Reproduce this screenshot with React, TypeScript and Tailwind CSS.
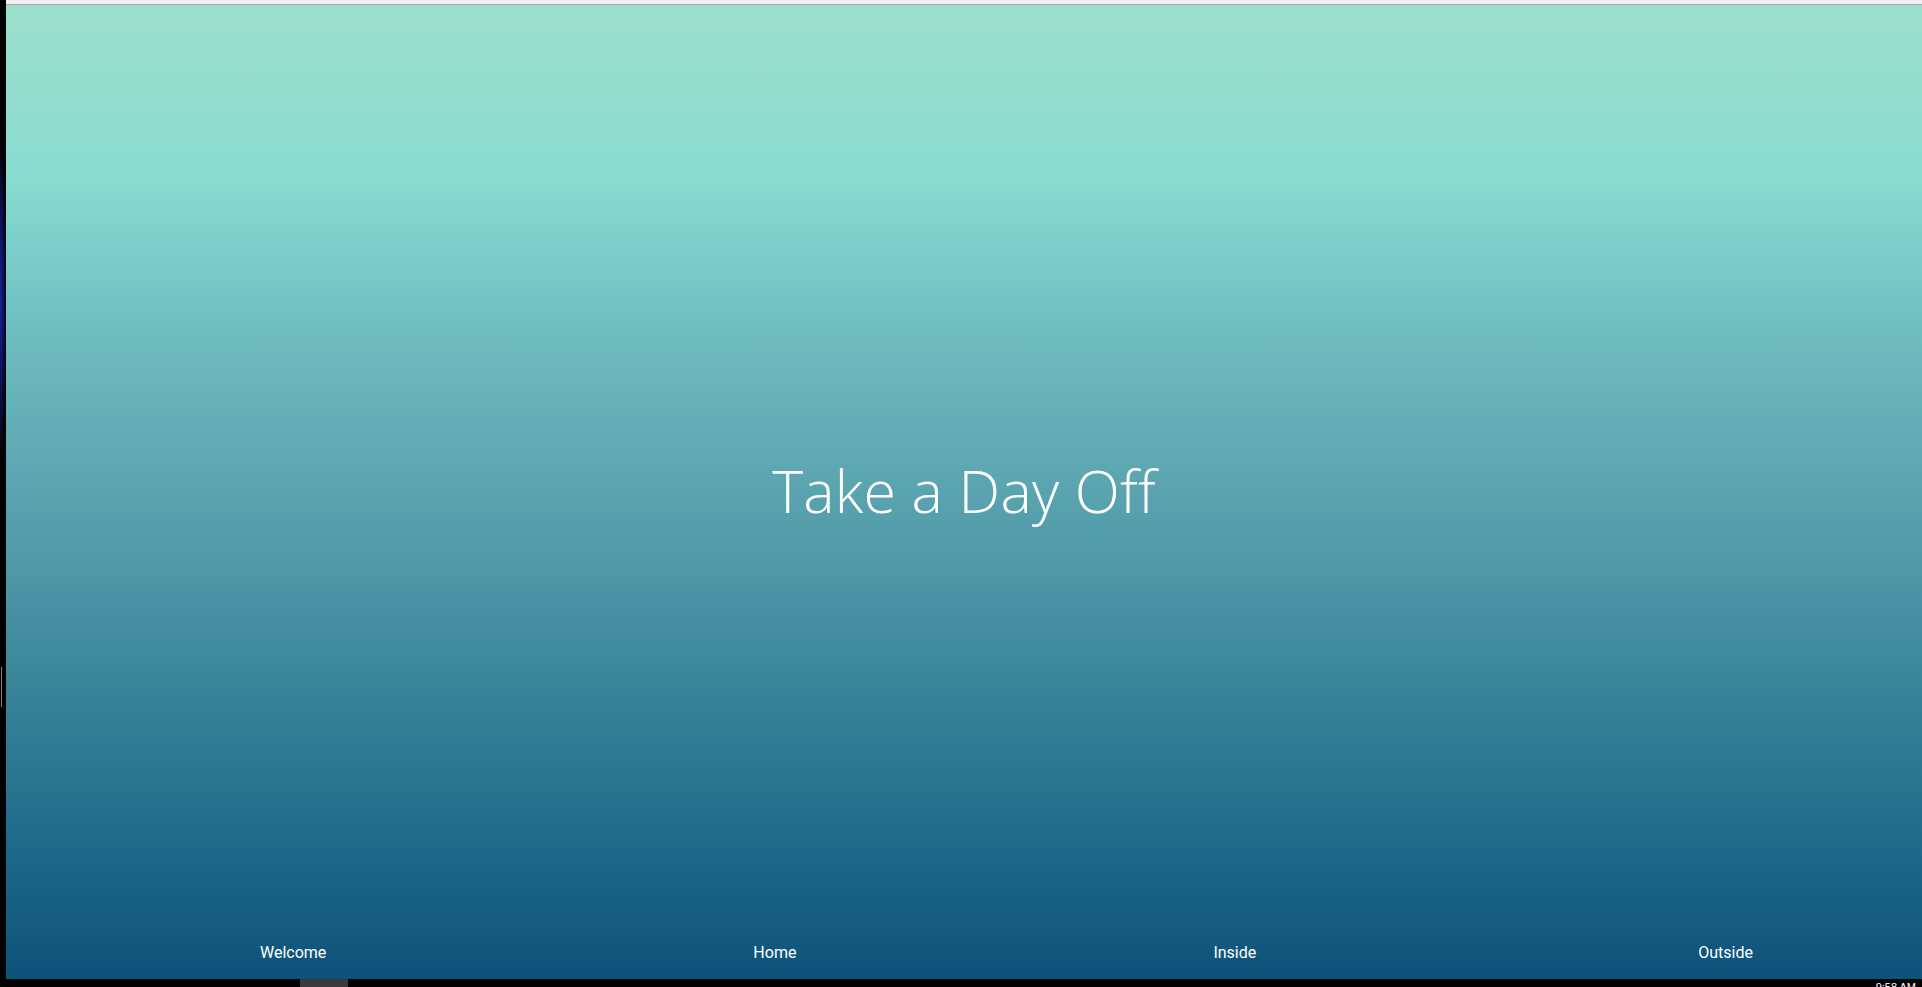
import React from 'react';

const links = [
  { label: 'Welcome', ml: 'ml-[254px]' },
  { label: 'Home', ml: 'ml-[427px]' },
  { label: 'Inside', ml: 'ml-[417px]' },
  { label: 'Outside', ml: 'ml-[442px]' },
];

const App: React.FC = () => {
  return (
    <div className="h-[987px] w-full overflow-hidden bg-black flex flex-col">
      <div className="flex flex-1 min-h-0">
        {/* desktop peeking out on the left */}
        <div className="relative w-[6px] shrink-0 bg-black">
          <div className="absolute left-0 top-[150px] h-[300px] w-[6px] bg-[radial-gradient(ellipse_at_left,#1a22a0_0%,#0b0f4a_45%,#000000_80%)]" />
          <div className="absolute left-[1px] top-[667px] h-[40px] w-[1px] bg-[#8a8a8a]" />
        </div>

        {/* browser window */}
        <div className="flex flex-1 min-w-0 flex-col">
          <div className="h-[4px] bg-[#f0f0f0]" />
          <div className="h-[1px] bg-[#a8a8a8]" />
          <main className="flex flex-1 flex-col bg-[linear-gradient(to_bottom,#9ddfcc_0%,#88dbd0_18%,#6fbcbf_34%,#57a1ae_52%,#3a8499_70%,#1f6a8a_86%,#0d5279_100%)]">
            <div className="flex flex-1 items-center justify-center pt-[48px]">
              <h1 className="text-[59px] font-light leading-none tracking-[0.2px] text-white [font-family:'Open_Sans',sans-serif]">
                Take a Day Off
              </h1>
            </div>
            <nav className="flex h-[52px] items-start pt-[16px] text-[16px] text-white [font-family:Roboto,sans-serif]">
              {links.map((l) => (
                <a key={l.label} href="#" className={`${l.ml} leading-5`}>
                  {l.label}
                </a>
              ))}
            </nav>
          </main>
        </div>
      </div>

      {/* taskbar strip */}
      <div className="relative h-[8px] shrink-0 bg-black">
        <div className="absolute left-[300px] top-0 h-[8px] w-[48px] bg-[#3a3a3a]" />
        <div className="absolute right-[6px] top-[2px] text-[11px] leading-3 text-white [font-family:'Liberation_Sans',sans-serif]">
          9:58 AM
        </div>
      </div>
    </div>
  );
};

export default App;
